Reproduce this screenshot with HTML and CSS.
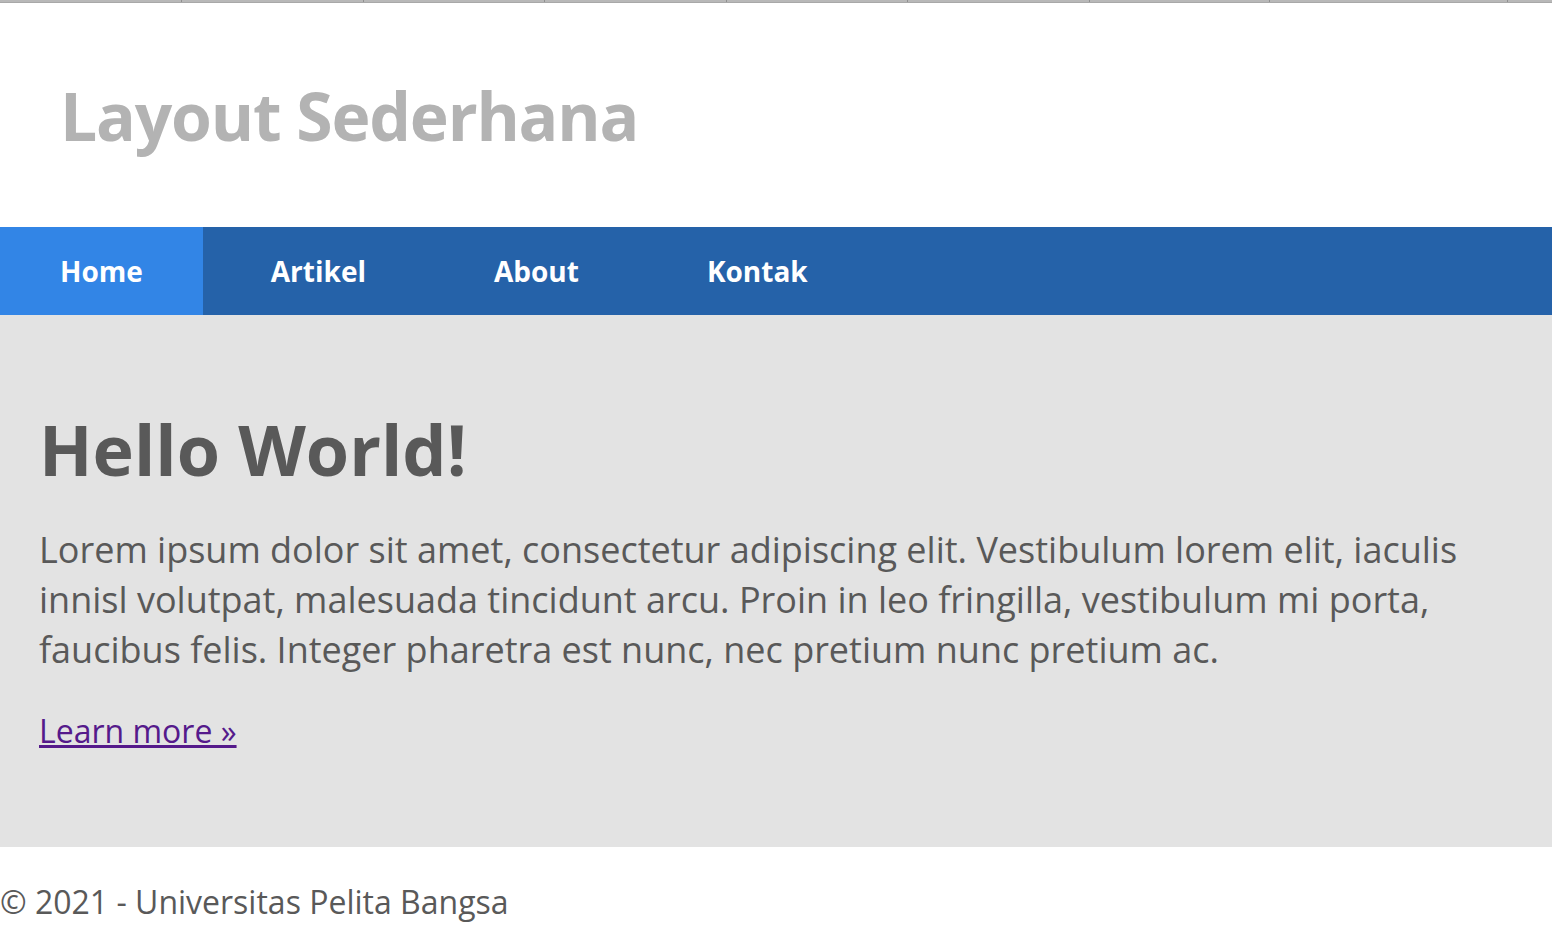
FILE: index.html
```html
<!DOCTYPE html>
<html lang="id">
<head>
<meta charset="utf-8">
<title>Layout Sederhana</title>
<link rel="stylesheet" href="styles.css">
</head>
<body>
<div class="tabstrip">
  <span class="tab"></span><span class="tab"></span><span class="tab t3"></span><span class="tab"></span><span class="tab t3"></span><span class="tab"></span><span class="tab t7"></span><span class="tab wide"></span><span class="tab last"></span>
</div>
<header class="site-header">
  <h1 class="site-title">Layout Sederhana</h1>
</header>
<nav class="site-nav">
  <a class="nav-item active" href="#">Home</a>
  <a class="nav-item" href="#">Artikel</a>
  <a class="nav-item" href="#">About</a>
  <a class="nav-item" href="#">Kontak</a>
</nav>
<main class="hero">
  <h2 class="hero-title">Hello World!</h2>
  <p class="hero-text">Lorem ipsum dolor sit amet, consectetur adipiscing elit. Vestibulum lorem elit, iaculis innisl volutpat, malesuada tincidunt arcu. Proin in leo fringilla, vestibulum mi porta, faucibus felis. Integer pharetra est nunc, nec pretium nunc pretium ac.</p>
  <p class="hero-link"><a href="#" class="learn">Learn more &raquo;</a></p>
</main>
<footer class="site-footer">
  <p>&copy; 2021 - Universitas Pelita Bangsa</p>
</footer>
</body>
</html>
```
FILE: styles.css
```css
html, body {
  margin: 0;
  padding: 0;
  background: #fff;
  font-family: "Open Sans", "Noto Sans", sans-serif;
  color: #595959;
}
.tabstrip {
  display: flex;
  height: 2px;
  background: #b8b8b8;
  border-bottom: 1px solid #a8a8a8;
}
.tab {
  width: 181px;
  border-right: 1px solid #8f8f8f;
}
.tab.t3 { width: 180px; }
.tab.t7 { width: 179px; }
.tab.wide { width: 237px; }
.tab.last { flex: 1; border-right: none; }
.site-header {
  height: 224px;
  display: flex;
  align-items: center;
  padding-left: 60px;
  box-sizing: border-box;
}
.site-title {
  margin: 0;
  font-size: 66px;
  font-weight: 700;
  color: #b3b3b3;
  letter-spacing: -1.2px;
}
.site-nav {
  display: flex;
  gap: 8px;
  height: 88px;
  background: #2562a9;
}
.nav-item {
  display: flex;
  align-items: center;
  padding: 0 60px 1px;
  color: #fff;
  font-weight: 700;
  font-size: 28px;
  text-decoration: none;
}
.nav-item.active {
  background: #3285e6;
}
.hero {
  background: #e3e3e3;
  padding: 92px 60px 91px 39px;
}
.hero-title {
  margin: 0 0 34px;
  font-size: 70px;
  font-weight: 700;
  line-height: 84px;
  color: #595959;
}
.hero-text {
  margin: 0 0 31px;
  font-size: 36px;
  line-height: 50px;
}
.hero-link {
  margin: 0;
  font-size: 32px;
  line-height: 50px;
}
.learn {
  color: #551a8b;
}
.site-footer {
  padding: 30px 0 30px;
}
.site-footer p {
  margin: 0;
  font-size: 32px;
  line-height: 50px;
}
```
